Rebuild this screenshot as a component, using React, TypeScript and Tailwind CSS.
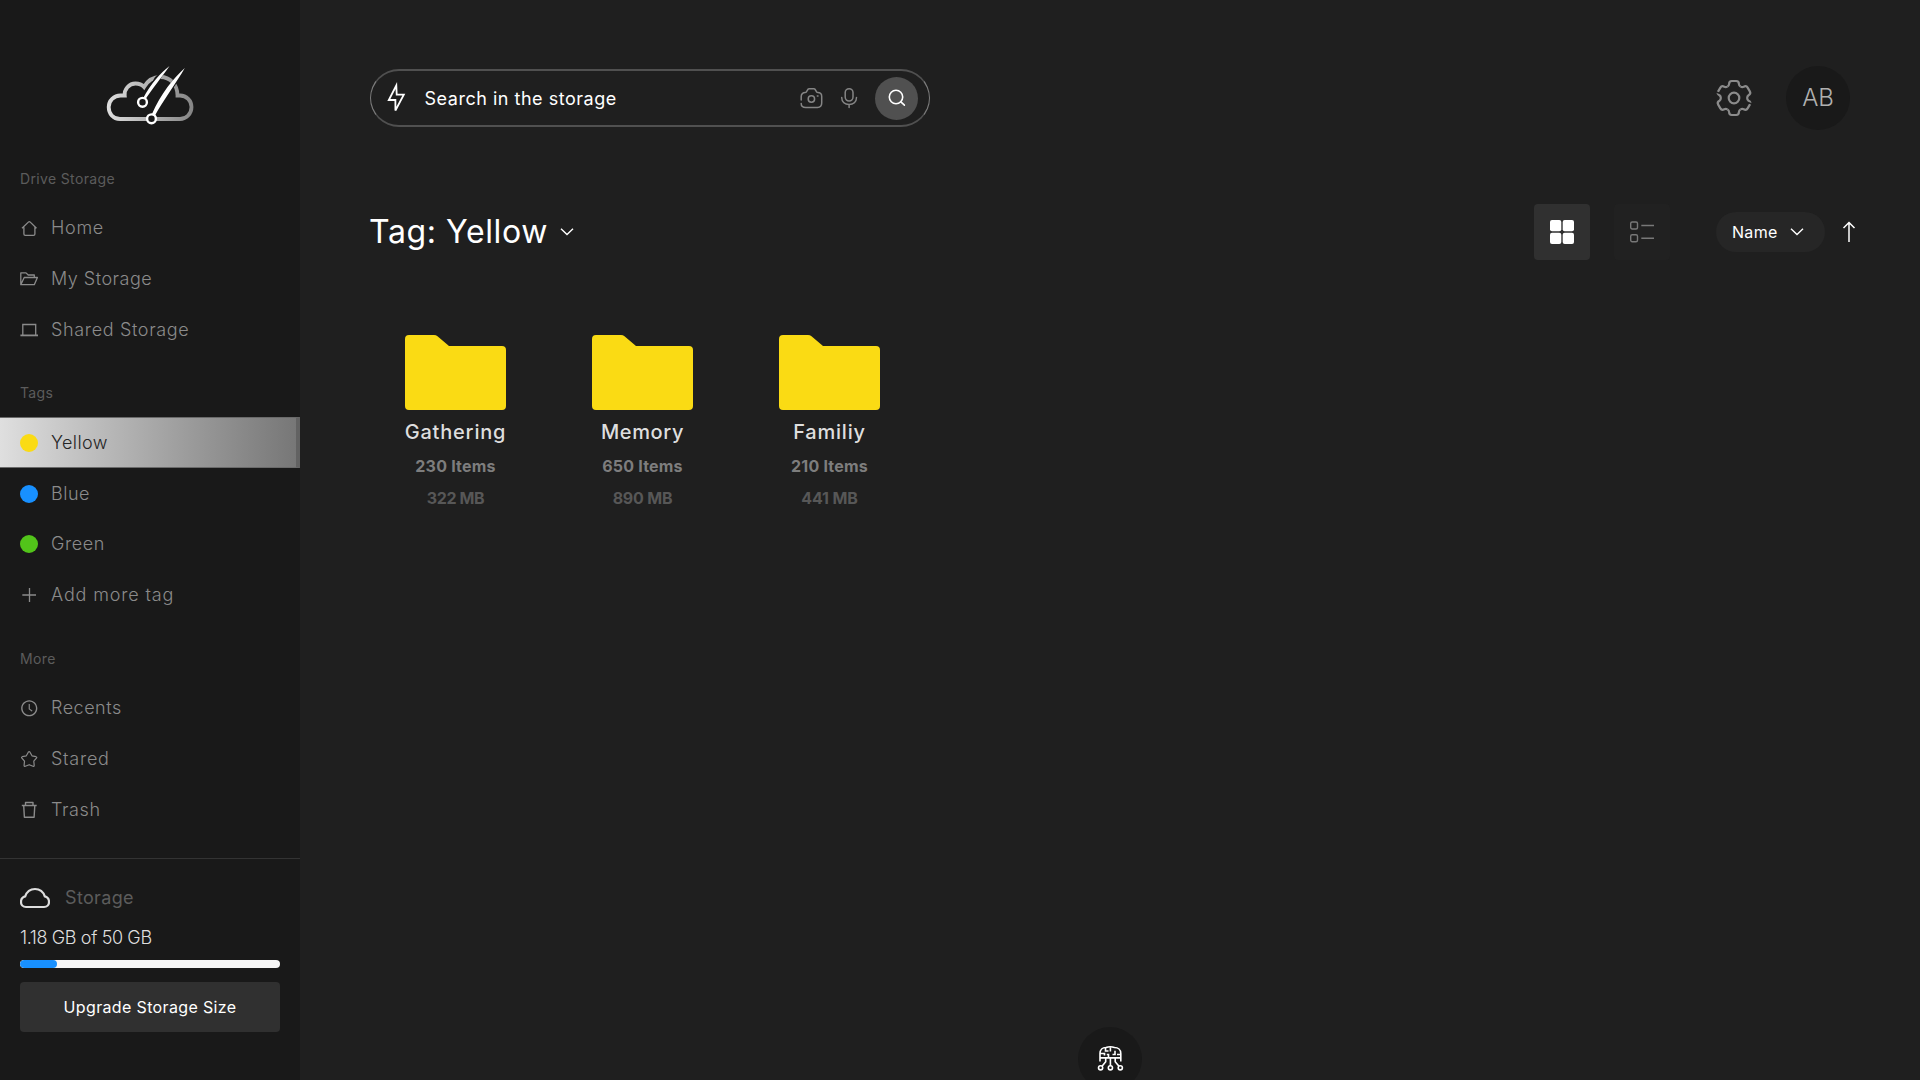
import type { ReactNode } from 'react';
import { AiOutlineClockCircle } from 'react-icons/ai';

interface NavItemProps {
  icon: ReactNode;
  label: string;
  tracking: string;
  active?: boolean;
}

interface FolderProps {
  name: string;
  items: string;
  size: string;
  nameClass: string;
  sizeClass: string;
}

const folders: FolderProps[] = [
  { name: 'Gathering', items: '230 Items', size: '322 MB', nameClass: 'tracking-[0.8px]', sizeClass: 'tracking-[-0.4px]' },
  { name: 'Memory', items: '650 Items', size: '890 MB', nameClass: 'tracking-[0.6px]', sizeClass: 'tracking-[-0.2px]' },
  { name: 'Familiy', items: '210 Items', size: '441 MB', nameClass: 'tracking-[0.8px]', sizeClass: 'tracking-[-0.1px]' },
];

function Logo() {
  return (
    <svg width="100" height="80" viewBox="0 0 100 80" fill="none">
      <defs>
        <linearGradient id="cloud" x1="7" y1="0" x2="93" y2="0" gradientUnits="userSpaceOnUse">
          <stop offset="0" stopColor="#dedede" />
          <stop offset="1" stopColor="#858585" />
        </linearGradient>
      </defs>
      <path
        d="M20 64C13 64 8.7 58.5 8.7 52C8.7 45.5 14 40.5 20.5 40.5H24.7C24 34.5 29 28.5 35.5 28.5C39 28.5 42 29.8 44 32C48 25 54 22 60.5 22C70 22 77.5 29.5 77.5 40.5H80C86.5 40.5 91.5 45.5 91.5 52C91.5 58.5 86.5 64 80 64Z"
        stroke="url(#cloud)"
        strokeWidth="3.8"
      />
      <path d="M41 47L55 22L69.5 10.5L60 24.5L46 47Z" fill="#191919" />
      <path d="M50 61L66 33L85 12L76 29L55 61Z" fill="#191919" />
      <path d="M69.5 11C61 17.5 50.5 29 43 43.5L45.3 44.6C51.500 34.5 62 22 69.5 11Z" fill="#fff" />
      <path d="M84.8 13C74 22.5 60.5 39 52 59L55 60.5C62.5 46.5 76.5 27.5 84.8 13Z" fill="#fff" />
      <circle cx="42.5" cy="47.3" r="4.4" fill="#191919" stroke="#fff" strokeWidth="2.4" />
      <circle cx="51.5" cy="63.8" r="4.4" fill="#191919" stroke="#fff" strokeWidth="2.4" />
    </svg>
  );
}

function HomeIcon() {
  return (
    <svg width="18" height="18" viewBox="0 0 18 18" fill="none" stroke="currentColor" strokeWidth="1.3" strokeLinejoin="round">
      <path d="M2 9.300L8.600 2.900Q9.300 2.300 10 2.900L16.500 9.300M3.900 8.200V14.900Q3.900 16.300 5.300 16.300H13.500Q14.900 16.300 14.900 14.900V8.200" />
    </svg>
  );
}

function FolderOpenIcon() {
  return (
    <svg width="18" height="18" viewBox="0 0 18 18" fill="none" stroke="currentColor" strokeWidth="1.3" strokeLinejoin="round">
      <path d="M0.800 14.700V2.900H6L8.200 5H14.300V7.500M0.800 14.700L4.200 7.500H17.400L14.300 14.700Z" />
    </svg>
  );
}

function LaptopIcon() {
  return (
    <svg width="18" height="18" viewBox="0 0 18 18" fill="none" stroke="currentColor" strokeWidth="1.3">
      <path d="M2.800 14V3.500H15.700V14" />
      <path d="M0.400 14.400H18" strokeWidth="1.800" />
    </svg>
  );
}

function StarIcon() {
  return (
    <svg width="18" height="18" viewBox="0 0 18 18" fill="none" stroke="currentColor" strokeWidth="1.2" strokeLinejoin="round">
      <path d="M8.300 2.200Q9.200 1 10 2.200L12 5.800L16 6.700Q17.200 7.100 16.400 8.100L13.800 11.200L14.200 15.400Q14.200 16.700 13 16.300L9.200 14.700L5.300 16.300Q4.100 16.700 4.100 15.400L4.500 11.200L1.900 8.100Q1.100 7.100 2.300 6.700L6.300 5.800Z" />
    </svg>
  );
}

function TrashIcon() {
  return (
    <svg width="18" height="18" viewBox="0 0 18 18" fill="none" stroke="currentColor" strokeWidth="1.4" strokeLinejoin="round">
      <path d="M1.800 4.500H16.700M3.700 4.500L4.400 16.200H14.100L14.800 4.500M5.500 4.200V1.500H13V4.200" />
    </svg>
  );
}

function PlusIcon() {
  return (
    <svg width="18" height="18" viewBox="0 0 18 18" stroke="currentColor" strokeWidth="1.3">
      <path d="M2.300 9H16M9.500 2V16" />
    </svg>
  );
}

function CloudIcon() {
  return (
    <svg width="30" height="22" viewBox="0 0 30 22" fill="none" stroke="#dedede" strokeWidth="2.2">
      <path d="M6 20C3 20 1 17.800 1 14.900C1 12 3 10 5.200 9.400C6.800 4.600 10.500 2 15 2C19.500 2 23.200 4.600 24.800 9.400C27 10 29 12 29 14.900C29 17.800 27 20 24 20Z" />
    </svg>
  );
}

function BoltIcon() {
  return (
    <svg width="20" height="32" viewBox="0 0 20 32" fill="none" stroke="#fff" strokeWidth="1.8">
      <path d="M10.300 3.500L2.800 18H9.400V28.500L17.800 12.700H10.700Z" />
    </svg>
  );
}

function CameraIcon() {
  return (
    <svg width="24" height="24" viewBox="0 0 24 24" fill="none" stroke="#858585" strokeWidth="1.5" strokeLinecap="round">
      <path d="M2.200 14V10.500C2.200 8 3.800 6.600 6.300 6.600C8.300 6.600 8 2.700 10 2.700H15C17 2.700 16.700 6.600 18.700 6.600C21.200 6.600 22.700 8 22.700 10.500V17C22.700 20 21.200 21.400 18.500 21.400H6.800C4 21.400 2.200 20 2.200 17.400" />
      <circle cx="12.400" cy="13" r="3.200" />
      <path d="M18.300 10H19" />
    </svg>
  );
}

function MicIcon() {
  return (
    <svg width="18" height="24" viewBox="0 0 18 24" fill="none" stroke="#858585" strokeWidth="1.5" strokeLinecap="round">
      <rect x="5.200" y="2.700" width="7.800" height="12.300" rx="3.900" />
      <path d="M1.700 11.500C1.700 16 4.900 18.400 9.100 18.400C13.300 18.400 16.500 16 16.500 11.500M9.100 18.400V21.500" />
    </svg>
  );
}

function SearchIcon() {
  return (
    <svg width="18" height="18" viewBox="0 0 18 18" fill="none" stroke="#fff" strokeWidth="1.6" strokeLinecap="round">
      <circle cx="8" cy="8" r="6.700" />
      <path d="M12.900 12.900L16.400 16.200" />
    </svg>
  );
}

function GearIcon() {
  return (
    <svg width="38" height="38" viewBox="-19 -19 38 38" fill="none" stroke="#8b8b8b" strokeWidth="2.2">
      {[0, 60, 120, 180, 240, 300].map((angle) => (
        <path
          key={angle}
          transform={`rotate(${angle})`}
          d="M-6.600 -11.400Q-5 -12.300 -4.900 -14Q-4.900 -17 -2.200 -17H2.200Q4.900 -17 4.900 -14Q5 -12.300 6.600 -11.400"
        />
      ))}
      <circle r="5.300" />
      <path d="M14 4.500L19 6.500M-14 -4.500L-19 -6.500" stroke="#1f1f1f" strokeWidth="1.6" />
    </svg>
  );
}

function ChevronIcon() {
  return (
    <svg width="14" height="10" viewBox="0 0 14 10" fill="none" stroke="#fff" strokeWidth="1.4">
      <path d="M1 1.800L7 7.500L13 1.800" />
    </svg>
  );
}

function BrainIcon() {
  return (
    <svg width="28" height="28" viewBox="0 0 28 28" fill="none" stroke="#fff" strokeWidth="1.6">
      <path d="M4 16.500V8.500C4 4.800 6.500 2.500 10 2.500C12 1.800 16.500 1.800 18.500 2.500C22 2.500 24.800 4.800 24.800 8.500V16.500" />
      <path d="M4 12.900H24.800M4 8.500H8.500V10.500M9.500 2.700V6H12.500M14.400 2.300V6.500M12.500 12.900V9.500H10.800M16.500 9.500H19V5.800M21 9.500H24.500" />
      <path d="M9.700 13V16.800L6 21.200M14.400 13V21M19.200 13V16.800L23 21.200" />
      <circle cx="4.600" cy="22.800" r="2.100" />
      <circle cx="14.400" cy="22.800" r="2.100" />
      <circle cx="24.300" cy="22.800" r="2.100" />
    </svg>
  );
}

function Dot({ className }: { className: string }) {
  return <span className={`block size-[18px] rounded-full ${className}`} />;
}

function SectionLabel({ children }: { children: ReactNode }) {
  return (
    <div className="h-[62px] pt-[26px] pl-5 text-sm leading-[23px] tracking-[0.35px] text-[#5c5c5c]">
      {children}
    </div>
  );
}

function NavItem({ icon, label, tracking, active = false }: NavItemProps) {
  return (
    <a
      className={`flex h-[50.8px] items-center gap-[13px] pl-5 text-lg font-light ${tracking} ${
        active
          ? 'border-y border-r-4 border-y-[#6a6a6a] border-r-[#626262] bg-linear-to-r from-[#dfdfdf] to-[#777] text-[#262626]'
          : 'text-[#8b8b8b]'
      }`}
    >
      <span className="flex size-[18px] items-center justify-center">{icon}</span>
      {label}
    </a>
  );
}

function Sidebar() {
  return (
    <aside className="flex w-[300px] flex-col bg-[#191919]">
      <div className="flex h-[141px] justify-center pt-[55px]">
        <Logo />
      </div>

      <nav>
        <SectionLabel>Drive Storage</SectionLabel>
        <NavItem icon={<HomeIcon />} label="Home" tracking="tracking-[0.7px]" />
        <NavItem icon={<FolderOpenIcon />} label="My Storage" tracking="tracking-[0.5px]" />
        <NavItem icon={<LaptopIcon />} label="Shared Storage" tracking="tracking-[0.65px]" />

        <SectionLabel>Tags</SectionLabel>
        <NavItem icon={<Dot className="bg-[#fadb14]" />} label="Yellow" tracking="tracking-[0.4px]" active />
        <NavItem icon={<Dot className="bg-[#1890ff]" />} label="Blue" tracking="tracking-[0.5px]" />
        <NavItem icon={<Dot className="bg-[#52c41a]" />} label="Green" tracking="tracking-[0.6px]" />
        <NavItem icon={<PlusIcon />} label="Add more tag" tracking="tracking-[0.85px]" />

        <SectionLabel>More</SectionLabel>
        <NavItem icon={<AiOutlineClockCircle size={18.5} className="shrink-0" />} label="Recents" tracking="tracking-[0.5px]" />
        <NavItem icon={<StarIcon />} label="Stared" tracking="tracking-[0.75px]" />
        <NavItem icon={<TrashIcon />} label="Trash" tracking="tracking-[0.6px]" />
      </nav>

      <div className="mt-[23px] border-t border-[#333] px-5 pt-7">
        <div className="flex h-[22px] items-center gap-[15px] text-lg tracking-[0.35px] text-[#5c5c5c]">
          <CloudIcon />
          Storage
        </div>
        <p className="mt-[15px] text-lg leading-7 font-light tracking-[-0.38px] text-[#dedede]">1.18 GB of 50 GB</p>
        <div className="mt-2 h-2 overflow-hidden rounded bg-[#f5f5f5]">
          <div className="h-full w-[14.4%] rounded bg-[#1890ff]" />
        </div>
        <button className="mt-3.5 h-[50px] w-full rounded bg-[#303030] text-base tracking-[0.35px] text-white">
          Upgrade Storage Size
        </button>
      </div>
    </aside>
  );
}

function SearchBar() {
  return (
    <div className="flex h-[58px] w-[560px] items-center rounded-full border-x border-y-2 border-x-[#7d7d7d] border-y-[#505050] pr-[11px] pl-[15px]">
      <BoltIcon />
      <span className="ml-[18.5px] flex-1 pt-px text-lg tracking-[0.52px] text-white">Search in the storage</span>
      <CameraIcon />
      <span className="ml-[17px]">
        <MicIcon />
      </span>
      <button className="ml-[17px] flex size-[43px] items-center justify-center rounded-full bg-[#505050]">
        <SearchIcon />
      </button>
    </div>
  );
}

function Folder({ name, items, size, nameClass, sizeClass }: FolderProps) {
  return (
    <div className="flex w-[187px] flex-col items-center">
      <svg width="101" height="75" viewBox="0 0 101 75" fill="#fadb14">
        <path d="M4 0H29Q31 0 32.500 1.300L44 11H97Q101 11 101 15V71Q101 75 97 75H4Q0 75 0 71V4Q0 0 4 0Z" />
      </svg>
      <h3 className={`mt-2 text-xl font-medium text-[#dedede] ${nameClass}`}>{name}</h3>
      <p className="mt-2 text-base font-bold tracking-[0.2px] text-[#7d7d7d]">{items}</p>
      <p className={`mt-2 text-base font-bold text-[#575757] ${sizeClass}`}>{size}</p>
    </div>
  );
}

export default function App() {
  return (
    <div className="flex h-screen overflow-hidden bg-[#1f1f1f] font-['Inter',sans-serif]">
      <Sidebar />

      <main className="flex flex-1 flex-col">
        <header className="flex items-center justify-between pt-[66px] pr-[70px] pl-[70px]">
          <SearchBar />
          <div className="flex items-center gap-[33px]">
            <GearIcon />
            <div className="flex size-16 items-center justify-center rounded-full bg-[#191919] text-2xl font-light text-[#b0b0b0]">
              AB
            </div>
          </div>
        </header>

        <div className="mt-[74px] flex h-14 items-center pr-[64px] pl-[69px]">
          <h1 className="text-[32px] tracking-[0.6px] text-white">Tag: Yellow</h1>
          <span className="ml-3">
            <ChevronIcon />
          </span>
          <button className="ml-auto flex size-14 items-center justify-center rounded bg-[#303030]">
            <svg width="24" height="24" viewBox="0 0 24 24" fill="#fff">
              <rect width="11.3" height="11.3" rx="2" />
              <rect x="12.7" width="11.3" height="11.3" rx="2" />
              <rect y="12.7" width="11.3" height="11.3" rx="2" />
              <rect x="12.7" y="12.7" width="11.3" height="11.3" rx="2" />
            </svg>
          </button>
          <button className="ml-6 flex size-14 items-center justify-center rounded bg-[#212121]">
            <svg width="24" height="24" viewBox="0 0 24 24" fill="none" stroke="#787878" strokeWidth="1.4">
              <rect x="0.700" y="2" width="6.800" height="7" rx="1.500" />
              <rect x="0.700" y="14.700" width="6.800" height="7" rx="1.500" />
              <path d="M11.300 5.500H24M11.300 18.300H24" />
            </svg>
          </button>
          <button className="ml-[46px] flex h-10 w-[109px] items-center justify-between rounded-full bg-[#262626] pr-[21px] pl-4 text-base tracking-[0.3px] text-white">
            Name
            <ChevronIcon />
          </button>
          <svg className="ml-[17px]" width="14" height="22" viewBox="0 0 14 22" fill="none" stroke="#fff" strokeWidth="1.5">
            <path d="M1.500 7L7 1.500L12.500 7M7 1.500V21" />
          </svg>
        </div>

        <div className="mt-[75px] flex pl-[62px]">
          {folders.map((folder) => (
            <Folder key={folder.name} {...folder} />
          ))}
        </div>

        <div className="mt-auto -mb-[11px] flex size-16 items-center justify-center self-center rounded-full bg-[#191919]">
          <BrainIcon />
        </div>
      </main>
    </div>
  );
}
